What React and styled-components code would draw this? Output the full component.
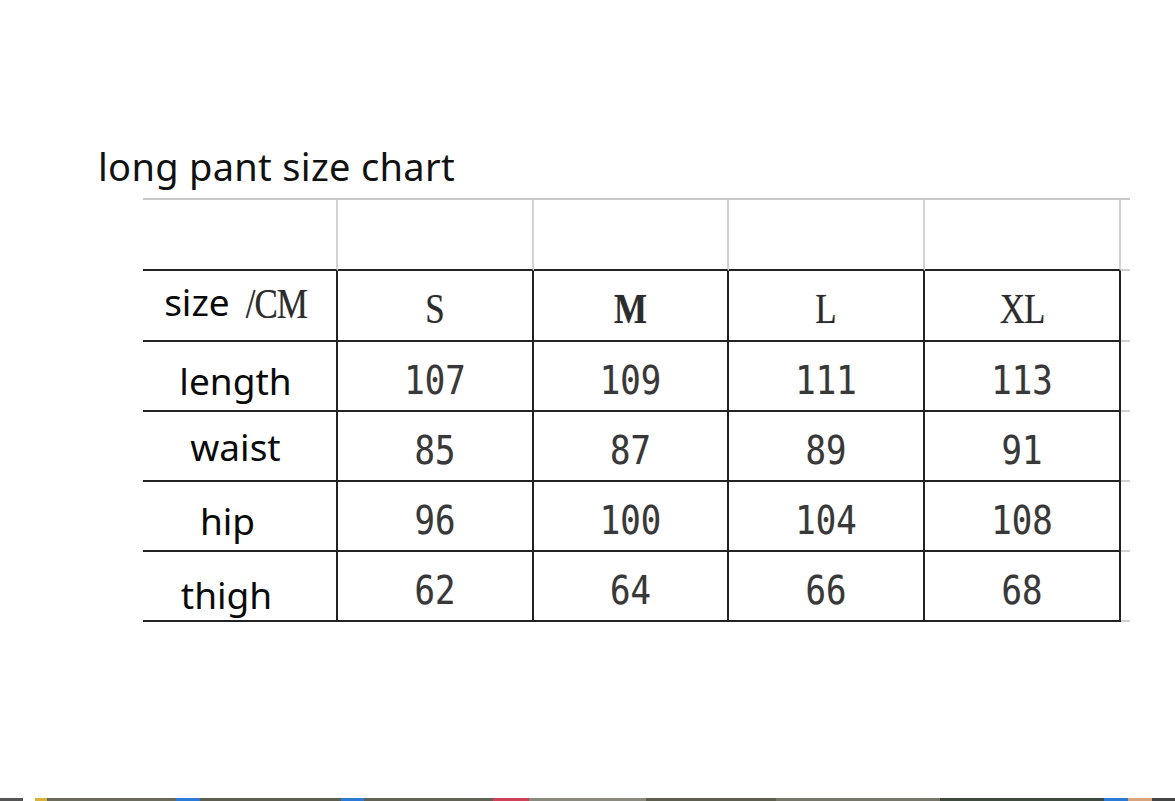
import React from "react";
import styled, { createGlobalStyle } from "styled-components";

const GlobalStyle = createGlobalStyle`
  html, body {
    margin: 0;
    padding: 0;
    background: #ffffff;
  }
`;

const Page = styled.div`
  min-height: 100vh;
  box-sizing: border-box;
  display: flex;
  flex-direction: column;
  padding-top: 142px;
  font-family: "Noto Sans", "Open Sans", sans-serif;
  color: #111;
`;

const Title = styled.h1`
  margin: 0 0 7px 98px;
  font-size: 38px;
  font-weight: 400;
  line-height: 49px;
  letter-spacing: 0.3px;
`;

const Chart = styled.div`
  margin-left: 143px;
  width: 987px;
  border-top: 2px solid #c9c9c9;
`;

const Row = styled.div`
  display: flex;
  height: ${({ $h }) => $h}px;
`;

const Cell = styled.div`
  box-sizing: border-box;
  width: ${({ $w }) => $w}px;
  flex: none;
  display: flex;
  align-items: center;
  justify-content: center;
  border-bottom: 2px solid #222;
  border-right: 2px solid ${({ $light }) => ($light ? "#d2d2d2" : "#222")};
  padding-top: 8px;
`;

const Tail = styled.div`
  flex: 1;
  border-bottom: 2px solid #d0d0d0;
`;

const Label = styled.span`
  font-family: "Noto Sans", "Open Sans", sans-serif;
  font-size: 37px;
  color: #0a0a0a;
  transform: translate(${({ $dx }) => $dx}px, ${({ $dy }) => $dy}px);
  display: inline-flex;
  align-items: baseline;
  gap: 16px;
  white-space: nowrap;
`;

const SizeName = styled.span`
  font-family: "Liberation Serif", "Times New Roman", serif;
  font-size: 35px;
  color: #2c2c2c;
  display: inline-block;
  transform: scaleY(1.18);
  letter-spacing: ${({ $tight }) => ($tight ? -1 : 0)}px;
  font-weight: ${({ $bold }) => ($bold ? 700 : 400)};
  text-shadow: 0 0 1px rgba(0, 0, 0, 0.35);
`;

const Value = styled.span`
  font-family: "DejaVu Sans Mono", "Liberation Mono", monospace;
  font-size: 34px;
  color: #383838;
  display: inline-block;
  transform: scaleY(1.13);
  text-shadow: 0 0 1px rgba(0, 0, 0, 0.3);
`;

const Strip = styled.div`
  margin-top: auto;
  height: 3px;
  background: linear-gradient(
    90deg,
    #555 0 2%,
    #fff 2% 3%,
    #d9b23a 3% 4%,
    #6b6b5c 4% 15%,
    #2a7bd8 15% 17%,
    #5d5d52 17% 29%,
    #2a7bd8 29% 31%,
    #626257 31% 42%,
    #d24158 42% 45%,
    #8a8a80 45% 55%,
    #5e5e4f 55% 66%,
    #77766a 66% 80%,
    #3f4a3f 80% 94%,
    #2a7bd8 94% 96%,
    #d8a37a 96% 98%,
    #444 98% 100%
  );
`;

const widths = [195, 196, 195, 196, 196];

const sizes = ["S", "M", "L", "XL"];

const rows = [
  { label: "length", dx: -4, dy: 0, values: ["107", "109", "111", "113"] },
  { label: "waist", dx: -4, dy: -4, values: ["85", "87", "89", "91"] },
  { label: "hip", dx: -12, dy: 0, values: ["96", "100", "104", "108"] },
  { label: "thigh", dx: -13, dy: 4, values: ["62", "64", "66", "68"] },
];

export default function App() {
  return (
    <>
      <GlobalStyle />
      <Page>
        <Title>long pant size chart</Title>
        <Chart>
          <Row $h={71}>
            {widths.map((w, i) => (
              <Cell key={i} $w={w} $light />
            ))}
            <Tail />
          </Row>
          <Row $h={71}>
            <Cell $w={widths[0]}>
              <Label $dx={-4} $dy={-8}>
                size <SizeName $tight>/CM</SizeName>
              </Label>
            </Cell>
            {sizes.map((s, i) => (
              <Cell key={s} $w={widths[i + 1]}>
                <SizeName $bold={s === "M"} $tight={s === "XL"}>
                  {s}
                </SizeName>
              </Cell>
            ))}
            <Tail />
          </Row>
          {rows.map((r) => (
            <Row key={r.label} $h={70}>
              <Cell $w={widths[0]}>
                <Label $dx={r.dx} $dy={r.dy}>
                  {r.label}
                </Label>
              </Cell>
              {r.values.map((v, i) => (
                <Cell key={i} $w={widths[i + 1]}>
                  <Value>{v}</Value>
                </Cell>
              ))}
              <Tail />
            </Row>
          ))}
        </Chart>
        <Strip />
      </Page>
    </>
  );
}
